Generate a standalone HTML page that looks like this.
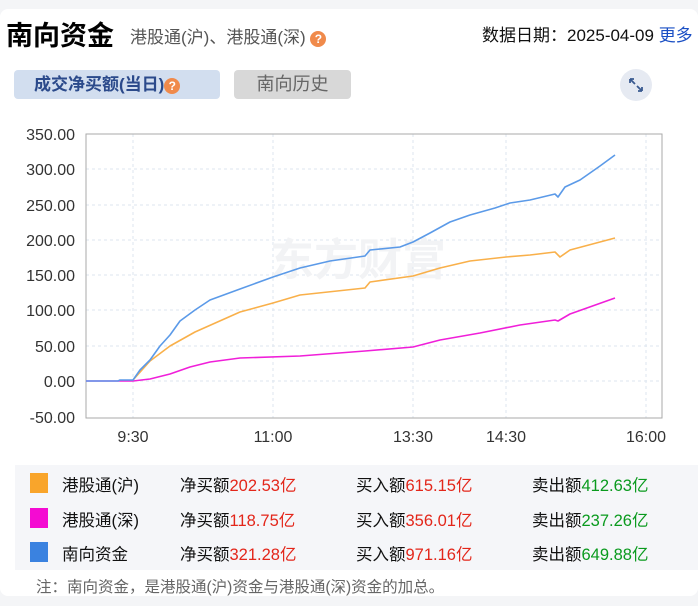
<!DOCTYPE html><html><head><meta charset="utf-8"><style>
body{margin:0;width:698px;height:606px;background:#f4f5f7;font-family:"Liberation Sans","Noto Sans CJK SC",sans-serif;overflow:hidden;position:relative}
.card{position:absolute;left:0;top:9px;width:698px;height:587px;background:#fff;border-radius:8px}
.a{position:absolute;white-space:nowrap}
.q{display:inline-block;width:16px;height:16px;border-radius:50%;background:#f08a4b;color:#fff;font-size:12px;line-height:16px;text-align:center;font-weight:bold;vertical-align:middle;text-indent:0}
.r{color:#e3261a}.g{color:#0a9a1e}
.row{position:absolute;left:0;width:683px;height:34px;font-size:16.5px;color:#111}
.row span{position:absolute;top:7px}
.row i{font-style:normal}
.sq{position:absolute;left:15px;top:8px;width:18px;height:20px}
</style></head><body>
<div class="card"></div>
<div class="a" style="left:6px;top:14px;font-size:27px;font-weight:bold;color:#000">南向资金</div>
<div class="a" style="left:130px;top:23px;font-size:17px;color:#555">港股通(沪)、港股通(深) <span class="q">?</span></div>
<div class="a" style="left:482px;top:21px;font-size:17px;color:#111">数据日期：2025-04-09 <span style="color:#1a4fc4">更多</span></div>
<div class="a" style="left:14px;top:70px;width:206px;height:29px;background:#d2deef;border-radius:4px;font-size:17px;font-weight:bold;color:#2b4a8b;line-height:29px;padding-left:20px;box-sizing:border-box">成交净买额(当日)<span class="q">?</span></div>
<div class="a" style="left:234px;top:70px;width:117px;height:29px;background:#d8d8d8;border-radius:4px;font-size:18px;color:#666;line-height:29px;text-align:center">南向历史</div>
<div class="a" style="left:620px;top:69px;width:32px;height:32px;border-radius:50%;background:#e6eaf2">
<svg width="32" height="32" viewBox="0 0 32 32" fill="none" stroke="#3a5a90" stroke-width="1.8"><path d="M10 10l5 5M10 10h4M10 10v4M22 22l-5-5M22 22h-4M22 22v-4"/></svg></div>
<svg class="a" style="left:0;top:110px" width="698" height="345" viewBox="0 110 698 345" font-family="Liberation Sans,sans-serif" font-size="16" fill="#333">
<g stroke="#dde5ef" stroke-dasharray="3,3" stroke-width="1">
<path d="M86 169H662M86 205H662M86 240H662M86 275H662M86 310H662M86 346H662M86 381H662M133 134V418M273 134V418M413 134V418M506 134V418M646 134V418"/></g>
<rect x="86" y="134" width="576" height="284" fill="none" stroke="#aaa"/>
<text x="270" y="275" font-size="44" font-weight="bold" fill="#f2f3f5" font-family="Noto Sans CJK SC">东方财富</text>
<g text-anchor="end"><text x="75" y="140">350.00</text><text x="75" y="175">300.00</text><text x="75" y="211">250.00</text><text x="75" y="246">200.00</text><text x="75" y="281">150.00</text><text x="75" y="316">100.00</text><text x="75" y="352">50.00</text><text x="75" y="387">0.00</text><text x="75" y="423">-50.00</text></g>
<g text-anchor="middle"><text x="133" y="442">9:30</text><text x="273" y="442">11:00</text><text x="413" y="442">13:30</text><text x="506" y="442">14:30</text><text x="646" y="442">16:00</text></g>
<g fill="none" stroke-width="1.6" stroke-linejoin="round">
<polyline style="stroke:#f01fd9" points="86,381 133,381 150,379 170,374 190,367 210,362 240,358 300,356 365,351 413,347 440,340 480,333 520,325 555,320 558,321 570,314 615,298"/>
<polyline stroke="#f9b04a" points="133,380 150,361 170,346 195,332 240,312 273,303 300,295 365,288 370,282 413,276 440,268 470,261 506,257 530,255 555,252 560,257 570,250 615,238"/>
<polyline stroke="#5b9ae8" points="86,381 118,381 120,380 133,380 140,370 150,360 160,346 170,335 180,321 195,310 210,300 240,289 273,277 300,268 330,261 365,256 370,250 400,247 413,242 430,233 450,222 470,215 495,208 510,203 530,200 555,194 558,197 565,187 580,180 600,166 615,155"/>
</g></svg>
<div class="a" style="left:15px;top:465px;width:683px;height:105px;background:#f5f6f9">
<div class="row" style="top:0"><div class="sq" style="background:#f9a52b"></div><span style="left:47px">港股通(沪)</span><span style="left:165px">净买额<i class="r">202.53亿</i></span><span style="left:341px">买入额<i class="r">615.15亿</i></span><span style="left:517px">卖出额<i class="g">412.63亿</i></span></div>
<div class="row" style="top:35px"><div class="sq" style="background:#f40bd2"></div><span style="left:47px">港股通(深)</span><span style="left:165px">净买额<i class="r">118.75亿</i></span><span style="left:341px">买入额<i class="r">356.01亿</i></span><span style="left:517px">卖出额<i class="g">237.26亿</i></span></div>
<div class="row" style="top:69px"><div class="sq" style="background:#3a82e0"></div><span style="left:47px">南向资金</span><span style="left:165px">净买额<i class="r">321.28亿</i></span><span style="left:341px">买入额<i class="r">971.16亿</i></span><span style="left:517px">卖出额<i class="g">649.88亿</i></span></div>
</div>
<div class="a" style="left:36px;top:575px;font-size:15.5px;color:#666">注：南向资金，是港股通(沪)资金与港股通(深)资金的加总。</div>
</body></html>
